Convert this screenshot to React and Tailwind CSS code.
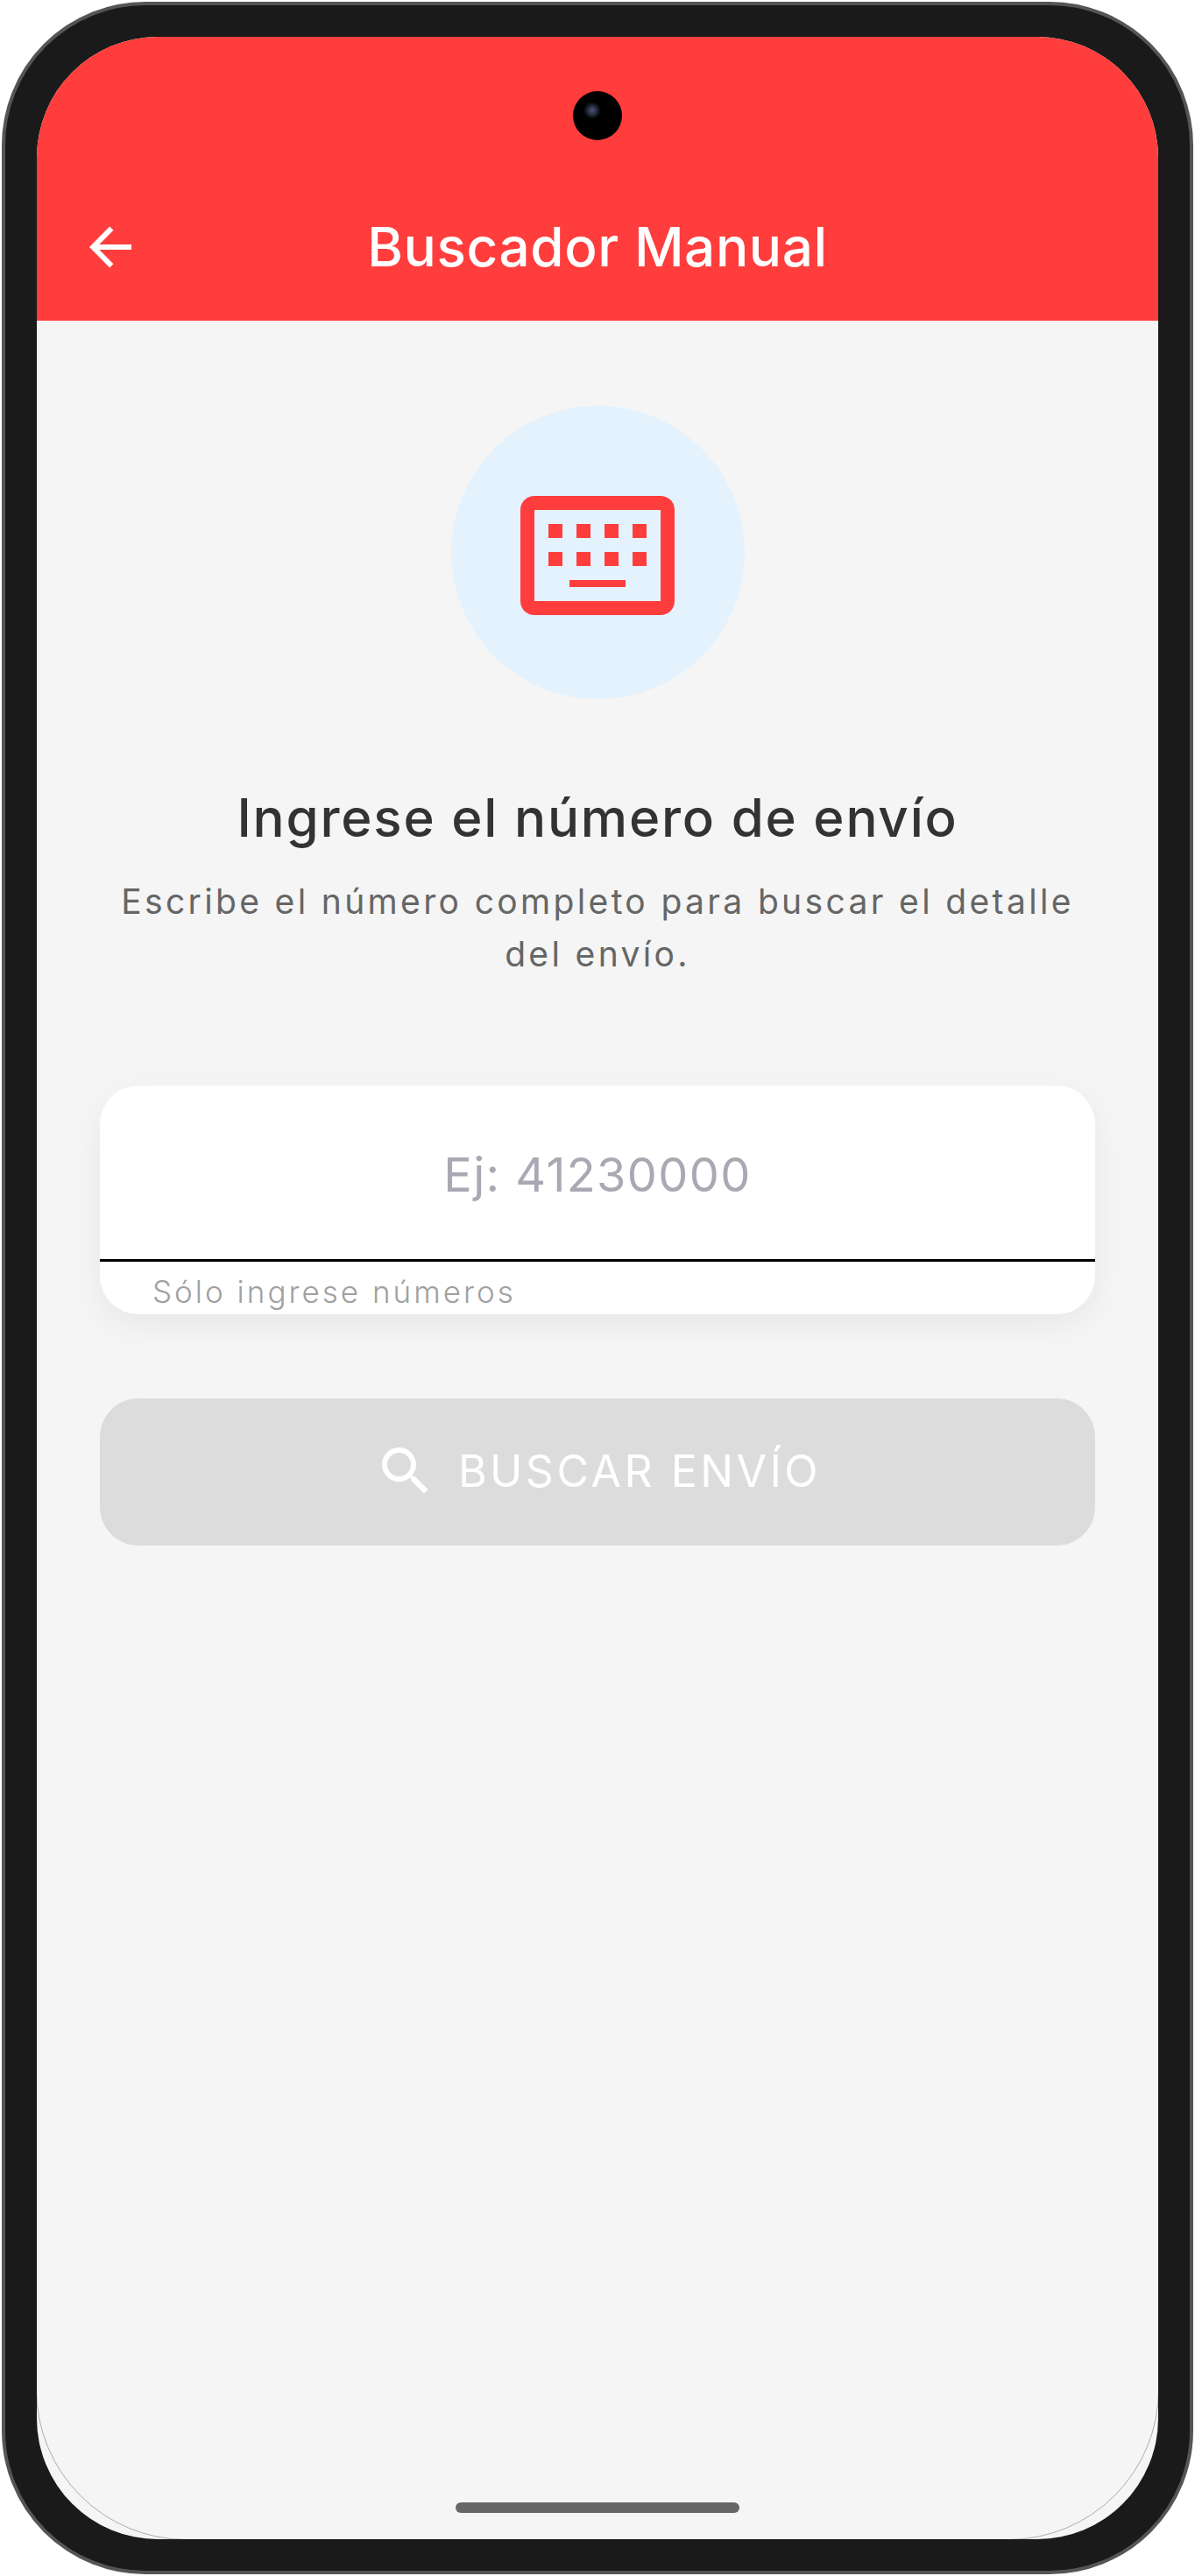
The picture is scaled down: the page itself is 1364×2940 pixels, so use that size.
const font = "font-['Inter','Open_Sans',sans-serif]"

function Keyboard() {
  return (
    <svg width="176" height="136" viewBox="0 0 176 136" fill="#ff3d3d" className="mt-[7px]">
      <path
        fillRule="evenodd"
        d="M16 0H160C169 0 176 7 176 16V120C176 129 169 136 160 136H16C7 136 0 129 0 120V16C0 7 7 0 16 0ZM16 16V120H160V16ZM32 32H48V48H32ZM64 32H80V48H64ZM96 32H112V48H96ZM128 32H144V48H128ZM32 64H48V80H32ZM64 64H80V80H64ZM96 64H112V80H96ZM128 64H144V80H128ZM56 96H120V104H56Z"
      />
    </svg>
  )
}

function SearchIcon() {
  return (
    <svg width="72" height="72" viewBox="0 0 24 24" fill="#fff">
      <path d="M15.5 14h-.79l-.28-.27C15.41 12.59 16 11.11 16 9.5 16 5.91 13.09 3 9.5 3S3 5.91 3 9.5 5.91 16 9.5 16c1.61 0 3.09-.59 4.23-1.57l.27.28v.79l5 4.99L20.49 19l-4.99-5zm-6 0C7.01 14 5 11.99 5 9.5S7.01 5 9.5 5 14 7.01 14 9.5 11.99 14 9.5 14z" />
    </svg>
  )
}

function BackArrow() {
  return (
    <svg width="48" height="48" viewBox="0 0 48 48" fill="none" stroke="#fff" strokeWidth="6">
      <path d="M48 24H5M25.3 2.7L4.24 24L25.3 45.3" />
    </svg>
  )
}

export default function App() {
  return (
    <div className={`w-[1364px] h-[2940px] bg-white p-[2px] ${font}`}>
      <div className="h-full rounded-[164px] border-4 border-[#555555] bg-[#1a1a1a] p-9">
        <div className="relative h-full overflow-hidden rounded-[138px] bg-[#f5f5f5]">
          <header className="relative flex h-[324px] items-end justify-center bg-[#ff3d3d] pb-[46px]">
            <div className="absolute top-[62px] left-[612px] h-14 w-14 rounded-full bg-black">
              <div className="absolute top-[12px] left-[12px] h-5 w-5 rounded-full bg-[radial-gradient(circle,#4a5a7a_0%,#000000_70%)]" />
            </div>
            <div className="absolute left-[60px] top-[216px] flex">
              <BackArrow />
            </div>
            <h1 className="text-[62px] leading-[76px] font-[450] tracking-[0.6px] text-white">Buscador Manual</h1>
          </header>

          <main className="flex flex-col items-center px-[72px] pt-[97px]">
            <div className="flex h-[335px] w-[335px] items-center justify-center rounded-full bg-[#e3f2fd]">
              <Keyboard />
            </div>
            <h2 className="mt-[97px] text-[60px] leading-[76px] font-[450] tracking-[1.8px] text-[#333333]">
              Ingrese el número de envío
            </h2>
            <p className="mt-[28px] max-w-[1120px] text-center text-[39px] leading-[60px] tracking-[3.35px] text-[#666666]">
              Escribe el número completo para buscar el detalle del envío.
            </p>

            <div className="mt-[120px] h-[261px] w-full overflow-hidden rounded-[44px] bg-white shadow-[0_12px_36px_rgba(0,0,0,0.06)]">
              <div className="flex h-[201px] items-center justify-center border-b-[3px] border-black pt-1 text-[54px] font-normal tracking-[1.4px] text-[#a9a9b3]">
                Ej: 41230000
              </div>
              <div className="pl-[60px] pt-[9px] text-[35px] leading-[50px] font-light tracking-[3px] text-[#a0a0a0]">
                Sólo ingrese números
              </div>
            </div>

            <div className="mt-[96px] flex h-[168px] w-full items-center justify-center gap-6 rounded-[44px] bg-[#dcdcdc] pb-[2px] text-[50px] font-normal tracking-[3.5px] text-white">
              <SearchIcon />
              BUSCAR ENVÍO
            </div>
          </main>

          <div className="pointer-events-none absolute inset-[-1px] rounded-b-[172px] border border-black/30" />
          <div className="absolute bottom-[30px] left-[478px] h-3 w-[324px] rounded-full bg-[#666666]" />
        </div>
      </div>
    </div>
  )
}
